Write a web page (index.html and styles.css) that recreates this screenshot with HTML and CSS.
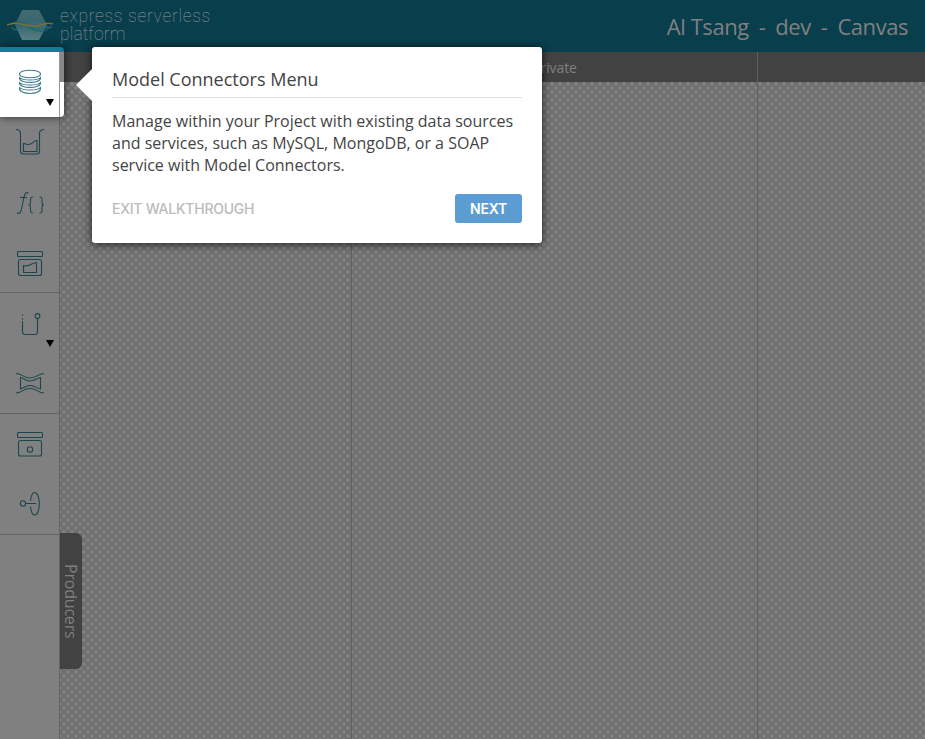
FILE: index.html
```html
<!DOCTYPE html>
<html lang="en">
<head>
<meta charset="utf-8">
<title>Canvas</title>
<link rel="stylesheet" href="styles.css">
</head>
<body>
<div class="app">
  <header class="header">
    <div class="brand">
      <svg class="logo" width="48" height="34" viewBox="0 0 48 34">
        <defs><linearGradient id="hex" x1="0" y1="0" x2="0" y2="1"><stop offset="0" stop-color="#456b70"/><stop offset=".5" stop-color="#34666f"/><stop offset="1" stop-color="#5c7f83"/></linearGradient></defs>
        <path d="M15 2H32L40 17L32 32H15L8 17Z" fill="url(#hex)"/>
        <path d="M1 18C10 9 18 15 25 19S40 23 46 15C40 27 30 25 23 21S8 14 1 18Z" fill="#1f6474" opacity=".7"/>
        <path d="M4 19C12 28 24 12 31 15S41 21 45 19" fill="none" stroke="#3d7580" stroke-width="1.5" opacity=".6"/>
        <path d="M0 17C9 13 17 17 25 18S39 13 46 16" fill="none" stroke="#87702b" stroke-width="1.3"/>
      </svg>
      <div class="brand-name"><div>express serverless</div><div class="brand-sub">platform</div></div>
    </div>
    <div class="context"><span>Al Tsang</span><span>-</span><span>dev</span><span>-</span><span>Canvas</span></div>
  </header>
  <div class="workspace">
    <nav class="toolbar">
      <div class="group group-models">
        <div class="tool-active">
          <svg width="60" height="60" viewBox="0 0 60 60"><g class="line"><ellipse cx="30" cy="22" rx="10.500" ry="3.800"/><path d="M19.500 25.500c-1 6.500 22 6.500 21 0-3 3.300-18 3.300-21 0zM19.500 30.500c-1 6.500 22 6.500 21 0-3 3.300-18 3.300-21 0zM19.500 35.500c-1.500 8 22.500 8 21 0-3 3.300-18 3.300-21 0z"/></g><path class="caret" d="M46 47h8l-4 7z"/></svg>
        </div>
        <svg width="60" height="60" viewBox="0 0 60 60"><g class="line"><path d="M16 17.500c3 0 4.500 1.500 4.500 4V39q0 3 3 3h13q3 0 3-3V21.500c0-2.500 1.500-4 4.500-4M23.500 39.500v-8c5 1 4 2 8 0 3-2 3-3 5.500-3v11z"/></g></svg>
        <svg width="60" height="60" viewBox="0 0 60 60"><g class="line"><path d="M17 41c3 1.500 4-1 5-6l2-10c1-4 2-5 4.500-4M20 25.500h7M33 25c-2.500 0-2.500 1-2.500 4s0 4-2 4c2 0 2 1 2 4s0 4 2.500 4M39.500 25c2.500 0 2.500 1 2.500 4s0 4 2 4c-2 0-2 1-2 4s0 4-2.500 4"/></g></svg>
        <svg width="60" height="60" viewBox="0 0 60 60"><g class="line"><rect x="17.500" y="19.500" width="25" height="5" rx="1"/><rect x="18.500" y="27.500" width="23" height="16" rx="2"/><path d="M23.500 40.500v-7c6 2 8-3 13-3v10z"/></g></svg>
      </div>
      <div class="group">
        <svg width="60" height="60" viewBox="0 0 60 60"><g class="line"><path d="M22.500 28v11q0 2.500 2.500 2.500h10q2.500 0 2.500-2.500V25.500"/><path stroke-dasharray="1.500 2" d="M22.500 21.500V28"/><circle cx="37.500" cy="23" r="2.400"/></g><path class="caret" d="M46 47h8l-4 7z"/></svg>
        <svg width="60" height="60" viewBox="0 0 60 60"><g class="line"><path d="M16 20.500c6 0 7 4.500 14 4.500s8-4.500 14-4.500M16 40c6 0 7-4.500 14-4.500s8 4.500 14 4.500M20.500 24.500c4 1 5 3.500 9.500 3.500s6-2.500 10.500-3.500V36c-4-1-5.500-3.500-10.500-3.500S24.500 35 20.500 36z"/></g></svg>
      </div>
      <div class="group">
        <svg width="60" height="60" viewBox="0 0 60 60"><g class="line"><rect x="17.500" y="18.500" width="25" height="5" rx="1"/><rect x="18.500" y="26.500" width="23" height="15.500" rx="2"/><circle cx="30" cy="35.500" r="2.700"/></g></svg>
        <svg width="60" height="60" viewBox="0 0 60 60"><g class="line"><circle cx="23" cy="29.500" r="2.700"/><path d="M26 29.500h10M30.500 27c.5-5 2-8.500 4.300-8.500 2.500 0 4.500 5 4.500 11s-2 11.500-4.500 11.500c-2.300 0-3.800-3.500-4.300-8.500"/></g></svg>
      </div>
    </nav>
    <main class="lanes">
      <section class="lane"><h2></h2></section>
      <section class="lane"><h2>Private</h2></section>
      <section class="lane"><h2></h2></section>
      <div class="producers">Producers</div>
    </main>
  </div>
</div>
<aside class="popover">
  <h1>Model Connectors Menu</h1>
  <p>Manage within your Project with existing data sources and services, such as MySQL, MongoDB, or a SOAP service with Model Connectors.</p>
  <footer><a class="exit">EXIT WALKTHROUGH</a><button class="next">NEXT</button></footer>
</aside>
</body>
</html>
```
FILE: styles.css
```css
* { box-sizing: border-box; }
body { margin: 0; font-family: "Open Sans", sans-serif; }
.app { height: 739px; display: flex; flex-direction: column; overflow: hidden; }
.header { height: 52px; flex: none; background: #093e4c; color: #808080; display: flex; justify-content: space-between; align-items: center; padding: 0 17px 0 7px; }
.brand { display: flex; align-items: center; gap: 5px; padding-bottom: 2px; }
.brand-name { font: 100 17.5px/18px Roboto, sans-serif; color: #989898; letter-spacing: .65px; padding-bottom: 1px; }
.brand-sub { letter-spacing: .1px; }
.context { font-size: 22px; line-height: 30px; letter-spacing: -.45px; display: flex; gap: 10px; padding-bottom: 1px; }
.workspace { flex: 1; display: flex; min-height: 0; }
.toolbar { width: 60px; flex: none; background: #808080; border-right: 1px solid #636363; }
.group { display: flow-root; border-bottom: 1px solid #636363; height: 121px; }
.group-models { height: 241px; }
.group svg { display: block; }
.line { fill: none; stroke: #1d454e; stroke-width: 1.1; }
.caret { fill: #000; }
.tool-active { position: relative; z-index: 2; width: 64px; height: 70px; margin: -5px 0; background: linear-gradient(90deg, #fff 59px, #999 59px, #999 60px, #fff 60px); border-top: 5px solid #127c99; border-radius: 0 4px 4px 0; box-shadow: 0 0 8px rgba(0,0,0,.65); }
.tool-active::after { content: ""; position: absolute; left: 60px; top: 0; width: 4px; height: 30px; background: #888; }
.tool-active .line { stroke: #407b8a; }
.lanes { flex: 1; position: relative; display: grid; grid-template-columns: 292px 406px 1fr; background-color: #808080; background-image: linear-gradient(45deg, #6f6f6f 8%, transparent 8% 42%, #6f6f6f 42% 58%, transparent 58% 92%, #6f6f6f 92%), linear-gradient(-45deg, #6f6f6f 8%, transparent 8% 42%, #6f6f6f 42% 58%, transparent 58% 92%, #6f6f6f 92%); background-size: 8px 8px; }
.lane { border-right: 1px solid #606060; }
.lane:nth-child(3) { border: 0; }
.lane h2 { height: 30px; margin: 0; background: #424242; color: #808080; font-size: 14px; letter-spacing: -.1px; font-weight: 400; line-height: 32px; text-align: center; }
.producers { position: absolute; left: 0; top: 481px; width: 22px; height: 136px; background: #424242; color: #808080; border-radius: 0 6px 6px 0; writing-mode: vertical-rl; text-align: center; font-size: 16px; letter-spacing: -.2px; line-height: 22px; }
.popover { position: absolute; left: 92px; top: 47px; width: 450px; height: 196px; padding: 20px; background: #fff; border-radius: 3px; box-shadow: 0 1px 9px rgba(0,0,0,.75); color: #444; }
.popover::before { content: ""; position: absolute; left: -16px; top: 22px; border: 16px solid transparent; border-left: 0; border-right-color: #fff; }
.popover h1 { margin: 0 0 12px; height: 31px; border-bottom: 1px solid #ddd; font-size: 18px; line-height: 25px; font-weight: 400; }
.popover p { margin: 0; font-size: 16px; line-height: 22px; }
.popover footer { margin-top: 18px; display: flex; justify-content: space-between; align-items: center; }
.exit { font: 500 14px Inter, sans-serif; letter-spacing: -.25px; color: #bbb; }
.next { width: 67px; height: 29px; border: 0; border-radius: 3px; background: #5b9dd2; color: #fff; font: 600 14px Inter, sans-serif; letter-spacing: -.2px; padding: 0; }
```
